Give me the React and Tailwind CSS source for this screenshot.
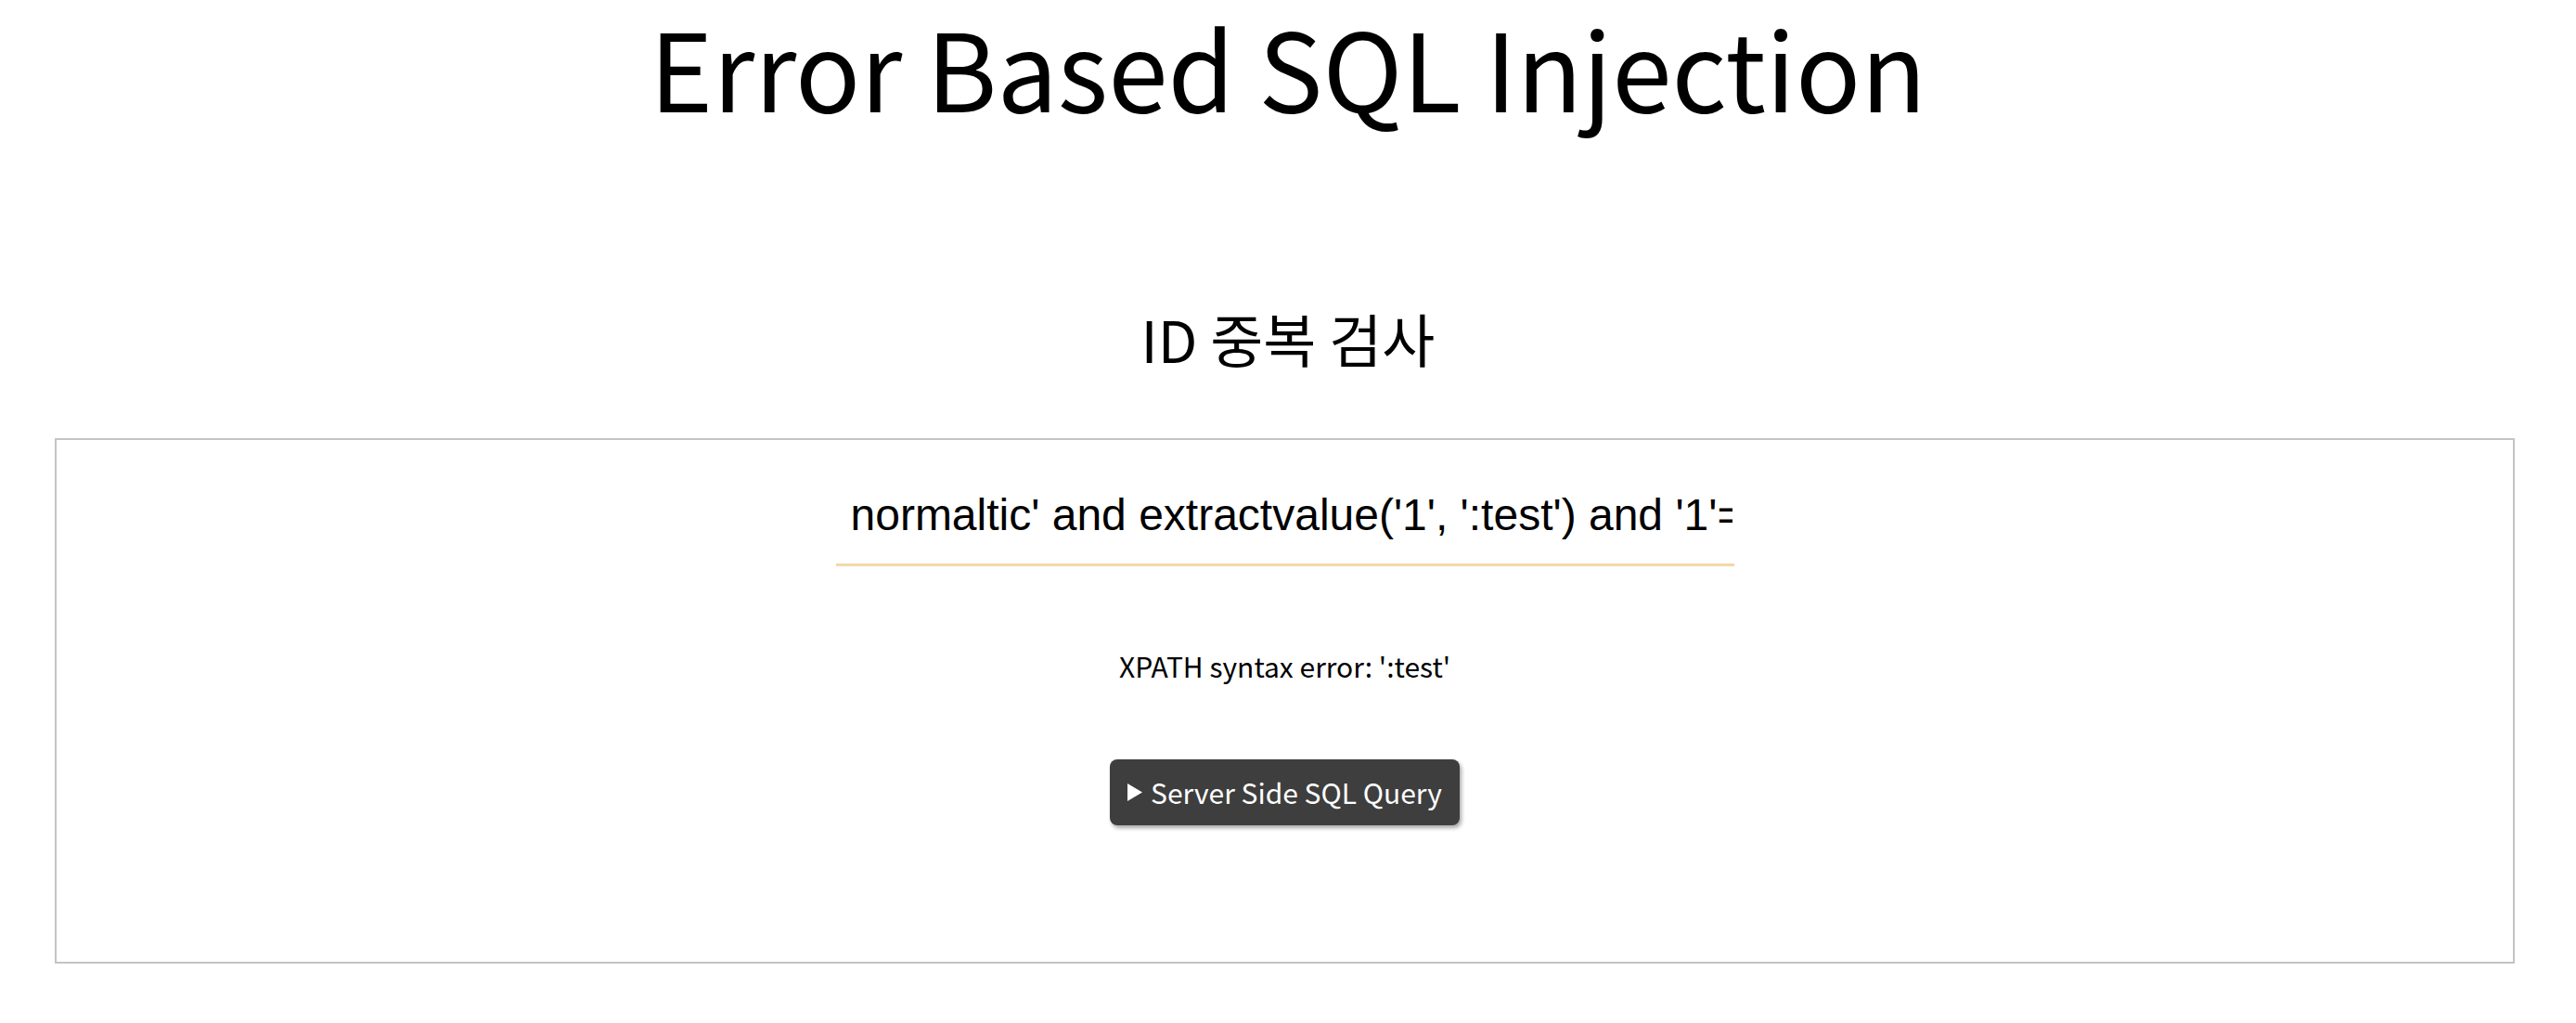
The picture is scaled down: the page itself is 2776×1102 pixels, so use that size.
export default function App() {
  const kr = { fontFamily: '"Noto Sans CJK KR", "Noto Sans", sans-serif' };

  return (
    <div className="min-h-screen bg-white text-black" style={kr}>
      {/* Title */}
      <h1 className="pt-[1px] text-center text-[116px] font-normal leading-[1.2]">
        Error Based SQL Injection
      </h1>

      {/* Subtitle */}
      <h2 className="mt-[193px] text-center text-[62px] font-normal leading-none">ID 중복 검사</h2>

      {/* Form box */}
      <div className="ml-[59px] mr-[66px] mt-[77px] flex flex-col items-center border-2 border-[#c4c4c4] pt-[37px] pb-[147px]">
        <input
          readOnly
          value="normaltic' and extractvalue('1', ':test') and '1'='1"
          className="h-[99px] w-[968px] border-b-[3px] border-[#f3d8a6] bg-transparent pl-[16px] pr-[2px] pb-[10px] text-[48px] text-black outline-none"
          style={{ fontFamily: '"Liberation Sans", Arial, sans-serif' }}
        />

        <p className="mt-[92px] text-[30px] leading-none">XPATH syntax error: ':test'</p>

        <button className="mt-[86px] flex h-[71px] items-center gap-[9px] rounded-[8px] bg-[#3e3e3e] px-[19px] text-[30px] text-white shadow-[2px_3px_4px_rgba(0,0,0,0.35)]">
          <svg width="16" height="19" viewBox="0 0 16 19">
            <polygon points="0,0 16,9.5 0,19" fill="white" />
          </svg>
          Server Side SQL Query
        </button>
      </div>
    </div>
  );
}
